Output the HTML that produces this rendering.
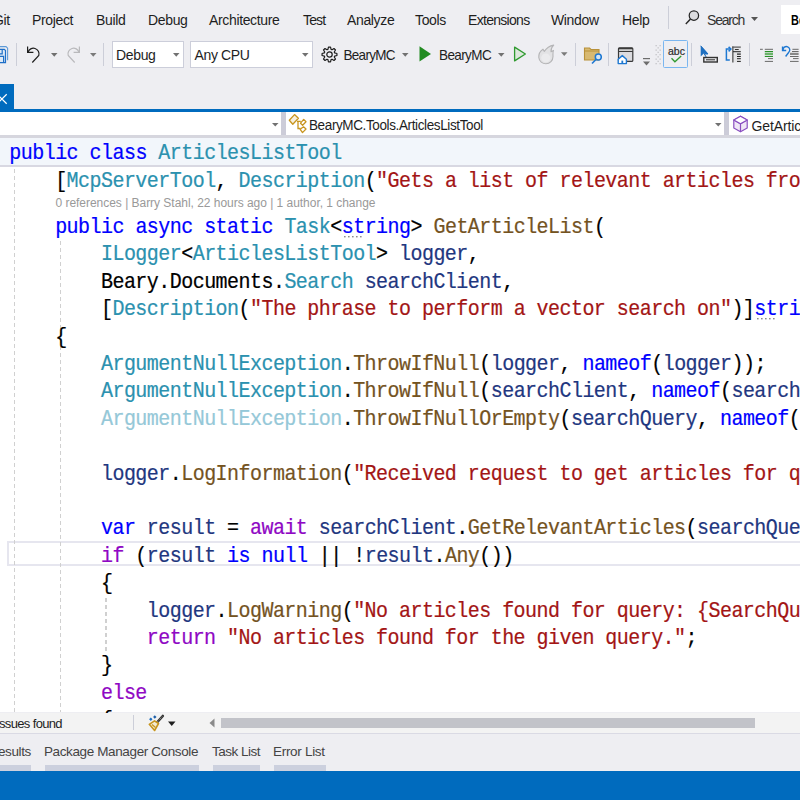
<!DOCTYPE html>
<html><head><meta charset="utf-8">
<style>
html,body{margin:0;padding:0;}
body{width:800px;height:800px;overflow:hidden;position:relative;background:#eeeef2;font-family:"Liberation Sans",sans-serif;}
.a{position:absolute;white-space:pre;}
.m{font-size:14px;color:#1e1e1e;top:11px;line-height:18px;letter-spacing:-0.35px;}
.tb{font-size:14px;color:#1e1e1e;line-height:18px;letter-spacing:-0.35px;}
.sep{position:absolute;width:1px;background:#ccced8;}
.code{font-family:"Liberation Mono",monospace;font-size:19.1px;line-height:27.4px;}
.ty2{color:#95c8d8}.kw{color:#0000ff}.ck{color:#8f08c4}.ty{color:#2b91af}.st{color:#a31515}.me{color:#74531f}.pa{color:#1f377f}.pl{color:#000}
.guide{position:absolute;width:1.4px;background:repeating-linear-gradient(to bottom,#d0d0d0 0 4.2px,transparent 4.2px 7px);}
</style></head><body>

<!-- MENU BAR -->
<div class="a m" style="left:-7px">Git</div>
<div class="a m" style="left:32px">Project</div>
<div class="a m" style="left:96px">Build</div>
<div class="a m" style="left:148px">Debug</div>
<div class="a m" style="left:209px">Architecture</div>
<div class="a m" style="left:303px;letter-spacing:-0.85px">Test</div>
<div class="a m" style="left:347px">Analyze</div>
<div class="a m" style="left:415px">Tools</div>
<div class="a m" style="left:468px;letter-spacing:-0.7px">Extensions</div>
<div class="a m" style="left:551px">Window</div>
<div class="a m" style="left:622px">Help</div>
<div class="sep" style="left:668px;top:6px;height:23px"></div>
<svg class="a" style="left:684px;top:9px" width="16" height="17" viewBox="0 0 16 17"><circle cx="9.9" cy="6.6" r="4.7" fill="#dcdcdf" stroke="#262626" stroke-width="1.25"/><line x1="6.5" y1="10" x2="1.8" y2="15" stroke="#262626" stroke-width="1.4"/></svg>
<div class="a m" style="left:707px;color:#333;letter-spacing:-1.2px">Search</div>
<svg class="a" style="left:751px;top:16.7px" width="8" height="5"><path d="M0 0h7l-3.5 4z" fill="#555"/></svg>
<div class="a" style="left:781px;top:5px;width:30px;height:29px;background:#fff"></div>
<div class="a m" style="left:790.5px;font-weight:bold;color:#000;font-size:14px;letter-spacing:0;transform:scaleX(0.78);transform-origin:0 0">Be</div>

<!-- TOOLBAR -->
<svg class="a" style="left:0;top:42px" width="12" height="24" viewBox="0 0 12 24"><path d="M-3 4.6H6L7.6 6.2V18.3" fill="none" stroke="#5d9ad8" stroke-width="1.1"/><path d="M-3 7.4H4.3L5.5 8.6V20.6H-3z" fill="#dde9f5" stroke="#1e6fc8" stroke-width="1.2"/><path d="M-3 11.9H2.2V7.4M-3 14.4H3.6V20.6" fill="none" stroke="#1e6fc8" stroke-width="1.2"/></svg>
<div class="sep" style="left:16px;top:43px;height:23px"></div>
<svg class="a" style="left:25px;top:45px" width="18" height="19" viewBox="0 0 18 19"><path d="M3 7.2A5 5 0 1 1 13.8 10.5L7.3 17.5" fill="none" stroke="#1e1e1e" stroke-width="1.2"/><path d="M2.6 1.6V7.4H8.4" fill="none" stroke="#1e1e1e" stroke-width="1.2"/></svg>
<svg class="a" style="left:51px;top:53px" width="7" height="4"><path d="M0 0h6.5l-3.25 3.8z" fill="#6f6f6f"/></svg>
<svg class="a" style="left:64px;top:45px" width="18" height="19" viewBox="0 0 18 19"><path d="M15 7.2A5 5 0 1 0 4.2 10.5L10.7 17.5" fill="none" stroke="#b9b9bc" stroke-width="1.2"/><path d="M15.4 1.6V7.4H9.6" fill="none" stroke="#b9b9bc" stroke-width="1.2"/></svg>
<svg class="a" style="left:89.5px;top:53px" width="7" height="4"><path d="M0 0h6.5l-3.25 3.8z" fill="#7a7a7a"/></svg>
<div class="sep" style="left:103px;top:43px;height:23px"></div>
<div class="a" style="left:112px;top:41px;width:70px;height:25px;background:#fff;border:1px solid #ccceda"></div>
<div class="a tb" style="left:116px;top:46px">Debug</div>
<svg class="a" style="left:173px;top:53px" width="7" height="4"><path d="M0 0h6.5l-3.25 3.8z" fill="#717171"/></svg>
<div class="a" style="left:190px;top:41px;width:121px;height:25px;background:#fff;border:1px solid #ccceda"></div>
<div class="a tb" style="left:194.5px;top:46px">Any CPU</div>
<svg class="a" style="left:301.5px;top:53px" width="7" height="4"><path d="M0 0h6.5l-3.25 3.8z" fill="#717171"/></svg>
<svg class="a" style="left:321px;top:46px" width="17" height="17" viewBox="0 0 17 17"><path d="M6.92 3.34 L7.46 1.07 L9.54 1.07 L10.08 3.34 L11.04 3.73 L13.01 2.51 L14.49 3.99 L13.27 5.96 L13.66 6.92 L15.93 7.46 L15.93 9.54 L13.66 10.08 L13.27 11.04 L14.49 13.01 L13.01 14.49 L11.04 13.27 L10.08 13.66 L9.54 15.93 L7.46 15.93 L6.92 13.66 L5.96 13.27 L3.99 14.49 L2.51 13.01 L3.73 11.04 L3.34 10.08 L1.07 9.54 L1.07 7.46 L3.34 6.92 L3.73 5.96 L2.51 3.99 L3.99 2.51 L5.96 3.73Z" fill="none" stroke="#1e1e1e" stroke-width="1.2" stroke-linejoin="round"/><circle cx="8.5" cy="8.5" r="2.7" fill="none" stroke="#1e1e1e" stroke-width="1.2"/></svg>
<div class="a tb" style="left:343.5px;top:46.5px;font-size:13.5px;letter-spacing:-0.7px;transform:scaleY(1.12);transform-origin:0 13.7px">BearyMC</div>
<svg class="a" style="left:402px;top:53px" width="7" height="4"><path d="M0 0h6.5l-3.25 3.8z" fill="#717171"/></svg>
<svg class="a" style="left:419px;top:46px" width="13" height="16" viewBox="0 0 13 16"><path d="M0.5 0.3L12 7.9 0.5 15.6z" fill="#228b22"/></svg>
<div class="a tb" style="left:439px;top:46.5px;font-size:13.5px;letter-spacing:-0.6px;transform:scaleY(1.12);transform-origin:0 13.7px">BearyMC</div>
<svg class="a" style="left:498px;top:53px" width="7" height="4"><path d="M0 0h6.5l-3.25 3.8z" fill="#717171"/></svg>
<svg class="a" style="left:513px;top:46px" width="14" height="16" viewBox="0 0 14 16"><path d="M1.6 1.1L12.4 8 1.6 14.9z" fill="#dde8dd" stroke="#2f9a2f" stroke-width="1.3" stroke-linejoin="round"/></svg>
<svg class="a" style="left:534px;top:42px" width="25" height="25" viewBox="0 0 25 25"><path d="M19.7 3.1C15 4 12.5 6 10.3 9.4L9 7.2C5.5 9.5 4.6 12.5 4.8 15.5 5.2 19.5 8.5 21.8 11.9 21.8 16 21.8 19 18.5 19 14.5 19 12.3 18.6 10.5 19.5 8.4L17 9.8C16.8 7 17.8 4.8 19.7 3.1Z" fill="#e2e2e4" stroke="#b4b4b6" stroke-width="1.1" stroke-linejoin="round"/><ellipse cx="11.8" cy="15.8" rx="4.6" ry="4.4" fill="#ebebed"/></svg>
<svg class="a" style="left:561px;top:52px" width="7" height="5"><path d="M0 0.2h6.5l-3.25 3.8z" fill="#7a7a7a"/></svg>
<div class="sep" style="left:575px;top:43px;height:23px"></div>
<svg class="a" style="left:583px;top:46px" width="19" height="19" viewBox="0 0 19 19"><path d="M1.5 2h5l1.5 1.5h8v10.5h-14.5z" fill="#d8b971" stroke="#b8913a" stroke-width="1.1"/><path d="M1.5 5h14.5" stroke="#b8913a" stroke-width="1"/><circle cx="15.3" cy="11" r="3" fill="#d6e6f5" stroke="#1e78d2" stroke-width="1.5"/><path d="M13.2 13.2L9 17.5" stroke="#1e78d2" stroke-width="1.6"/></svg>
<div class="sep" style="left:608px;top:43px;height:23px"></div>
<svg class="a" style="left:616px;top:46px" width="20" height="20" viewBox="0 0 20 20"><rect x="2.5" y="1.8" width="14.3" height="13.6" rx="1" fill="#dcdce0" stroke="#3a3a3a" stroke-width="1.2"/><rect x="2.5" y="1.8" width="14.3" height="1.8" fill="#3a3a3a"/><rect x="3.2" y="3.6" width="13" height="1.2" fill="#fff"/><rect x="2.5" y="4.8" width="14.3" height="1.2" fill="#3a3a3a"/><path d="M2.2 13.2L6.3 9.6 10.4 13.2V17.6H2.2z" fill="#fff" stroke="#1e78d2" stroke-width="1.4" stroke-linejoin="round"/><rect x="5.4" y="14.6" width="1.8" height="3" fill="#1e78d2"/><path d="M10.5 12.5V17.8M1.5 13.8L6.3 9.4 11 13.8" fill="none" stroke="#eeeef2" stroke-width="0"/></svg>
<svg class="a" style="left:643px;top:57px" width="8" height="9"><rect x="0" y="1" width="7" height="1.2" fill="#6d6d6d"/><path d="M0 4.5h7l-3.5 4z" fill="#6d6d6d"/></svg>
<svg class="a" style="left:655px;top:43px" width="7" height="23"><g fill="#c4c4c8"><rect x="0.5" y="2" width="1.3" height="1.3"/><rect x="4.5" y="2" width="1.3" height="1.3"/><rect x="0.5" y="6.5" width="1.3" height="1.3"/><rect x="4.5" y="6.5" width="1.3" height="1.3"/><rect x="0.5" y="11" width="1.3" height="1.3"/><rect x="4.5" y="11" width="1.3" height="1.3"/><rect x="0.5" y="15.5" width="1.3" height="1.3"/><rect x="4.5" y="15.5" width="1.3" height="1.3"/><rect x="0.5" y="20" width="1.3" height="1.3"/><rect x="4.5" y="20" width="1.3" height="1.3"/><rect x="2.5" y="4.2" width="1.3" height="1.3"/><rect x="2.5" y="8.7" width="1.3" height="1.3"/><rect x="2.5" y="13.2" width="1.3" height="1.3"/><rect x="2.5" y="17.7" width="1.3" height="1.3"/></g></svg>
<div class="a" style="left:663.3px;top:40.2px;width:22.4px;height:26.2px;background:#eeeef2;border:1.6px solid #7ab6f0;border-radius:1.5px"></div>
<div class="a" style="left:668px;top:44.8px;font-size:10.5px;color:#2a2a2a;letter-spacing:0px;line-height:12px;-webkit-text-stroke:0.2px #2a2a2a">abc</div>
<svg class="a" style="left:670px;top:54px" width="13" height="10"><path d="M1.5 4.3L4.9 7.8 11.2 2" fill="none" stroke="#2f9a2f" stroke-width="1.3"/></svg>
<div class="sep" style="left:691px;top:43px;height:23px"></div>
<svg class="a" style="left:699px;top:45px" width="21" height="19" viewBox="0 0 21 19"><path d="M1.7 0.8L9 9H5.3l2.2 3.5" fill="#1e6fc0" stroke="#1e6fc0" stroke-width="1"/><path d="M1.7 0.8V11.5L4.5 8.8H9z" fill="#1e6fc0"/><rect x="4.8" y="12.5" width="13.5" height="4.5" fill="#e8e8ec" stroke="#333" stroke-width="1.4"/><rect x="7" y="14" width="9" height="1.4" fill="#666"/></svg>
<svg class="a" style="left:720px;top:42px" width="24" height="24" viewBox="0 0 24 24"><path d="M9.8 7.1H6.4V18H9.8" fill="none" stroke="#1e78d2" stroke-width="1.5"/><path d="M8.6 4.9L10.9 7.1 8.6 9.4" fill="none" stroke="#1e78d2" stroke-width="1.5"/><rect x="13" y="5" width="7.8" height="15.3" fill="#e4e4e6"/><g fill="#555"><rect x="12.2" y="4.5" width="1.3" height="16"/><rect x="12.2" y="4.5" width="8.6" height="1.2"/></g><g fill="#222"><rect x="14.9" y="7" width="3.8" height="0.9"/><rect x="13" y="9.2" width="7.8" height="1"/><rect x="17" y="11.5" width="3.8" height="1.2"/><rect x="17" y="14" width="3.8" height="1"/><rect x="17" y="16.2" width="3.8" height="1"/><rect x="17" y="18.9" width="3.8" height="1"/></g></svg>
<div class="sep" style="left:749px;top:43px;height:23px"></div>
<svg class="a" style="left:755px;top:42px" width="45" height="24" viewBox="0 0 45 24"><g fill="#6a6a6a"><rect x="5" y="6.8" width="2.8" height="1"/><rect x="9.8" y="6.8" width="8.2" height="1"/><rect x="13" y="16.1" width="5" height="1"/><rect x="9.8" y="18.9" width="8.2" height="1"/></g><rect x="9.8" y="9" width="8.2" height="1" fill="#2a8f2a"/><rect x="9.8" y="10.6" width="8.2" height="2.6" fill="#6cb46c"/><rect x="9.8" y="14" width="8.2" height="1" fill="#2a8f2a"/><path d="M28 8.2A3.4 3.4 0 1 1 33.6 10.5L30.6 14.5" fill="none" stroke="#1e78d2" stroke-width="1.4"/><path d="M27.6 4.5V8.5H31.2" fill="none" stroke="#1e78d2" stroke-width="1.5"/><g fill="#6a6a6a"><rect x="37.4" y="6.8" width="6.2" height="1"/><rect x="37" y="9" width="6.6" height="1"/><rect x="35" y="10.8" width="8.6" height="2.2" fill="#888"/><rect x="35" y="14" width="8.6" height="1"/><rect x="38" y="16.1" width="5.6" height="1"/><rect x="35" y="18.9" width="8.6" height="1"/></g></svg>

<!-- TABS -->
<div class="a" style="left:0;top:84px;width:13.5px;height:25px;background:#006bbe"></div>
<svg class="a" style="left:0;top:92px" width="10" height="14"><path d="M-3 2.2L6.7 11.8M6.7 2.2L-3 11.8" stroke="#fff" stroke-width="1.2"/></svg>
<div class="a" style="left:0;top:109px;width:800px;height:3px;background:#006bbe"></div>
<!-- NAV BAR -->
<div class="a" style="left:0;top:112px;width:800px;height:23px;background:#fff"></div>
<div class="a" style="left:0;top:135px;width:800px;height:3px;background:#d6d6de"></div>
<svg class="a" style="left:272px;top:123px" width="7" height="4"><path d="M0 0h6.5l-3.25 3.6z" fill="#717171"/></svg>
<div class="a" style="left:281px;top:112px;width:4.5px;height:23px;background:#ccccd8"></div>
<svg class="a" style="left:285px;top:110px" width="25" height="26" viewBox="0 0 25 26"><path d="M4.3 10.2L9.5 4.6 13.4 8.2 7.8 14.2z" fill="#f6efdf" stroke="#c8951e" stroke-width="1.3" stroke-linejoin="round"/><path d="M15.5 13.2L18.7 9.4 21 11.8 17.6 15.2z" fill="#fff" stroke="#c8951e" stroke-width="1.3" stroke-linejoin="round"/><path d="M15.2 19.3L18.5 16.8 21 19 17.5 22.6z" fill="#fff" stroke="#c8951e" stroke-width="1.3" stroke-linejoin="round"/><path d="M12 11.4H15.8M13 11.4V18.5H15.5" fill="none" stroke="#c8951e" stroke-width="1.3"/></svg>
<div class="a" style="left:309px;top:117.5px;font-size:13.5px;color:#1e1e1e;line-height:16px;letter-spacing:-0.38px;transform:scaleY(1.1);transform-origin:0 12.7px">BearyMC.Tools.ArticlesListTool</div>
<svg class="a" style="left:715px;top:123px" width="7" height="4"><path d="M0 0h6.5l-3.25 3.6z" fill="#717171"/></svg>
<div class="a" style="left:724px;top:112px;width:4.5px;height:23px;background:#ccccd8"></div>
<svg class="a" style="left:732px;top:115px" width="17" height="18" viewBox="0 0 17 18"><path d="M8.5 1.2L15.2 5v8L8.5 16.8 1.8 13V5z" fill="#efe6f6" stroke="#8a4fc0" stroke-width="1.2" stroke-linejoin="round"/><path d="M1.8 5L8.5 8.8 15.2 5M8.5 8.8V16.8" fill="none" stroke="#8a4fc0" stroke-width="1.2"/><path d="M1.8 5L8.5 1.2 15.2 5 8.5 8.8z" fill="#fff"/><path d="M1.8 5L8.5 1.2 15.2 5 8.5 8.8z" fill="none" stroke="#8a4fc0" stroke-width="1.2" stroke-linejoin="round"/></svg>
<div class="a" style="left:751.5px;top:117.5px;font-size:14px;color:#1e1e1e;line-height:16px;letter-spacing:-0.1px;transform:scaleY(1.08);transform-origin:0 12.7px">GetArticleList</div>
<!-- EDITOR -->
<div class="a" style="left:0;top:138px;width:800px;height:574px;background:#fff"></div>
<div class="a" style="left:0;top:138px;width:800px;height:27px;background:#f2f6fb"></div>
<div class="a" style="left:0;top:165px;width:800px;height:1.6px;background:#d8d8e2"></div>
<div class="a" style="left:7px;top:540.8px;width:800px;height:21.5px;border:2px solid #e6e6ef"></div>
<div class="guide" style="left:13.9px;top:169px;height:543px"></div>
<div class="guide" style="left:59.7px;top:241px;height:471px"></div>
<div class="guide" style="left:105.2px;top:597.5px;height:53px"></div>
<style>.code{font-size:20.0px;letter-spacing:-0.540px;transform:scaleY(1.08);transform-origin:0 19.02px;-webkit-text-stroke:0.2px currentColor}</style>
<div class="a code" style="left:9.30px;top:140.48px"><span class="kw">public</span> <span class="kw">class</span> <span class="ty">ArticlesListTool</span></div>
<div class="a code" style="left:55.14px;top:167.98px"><span class="pl">[</span><span class="ty">McpServerTool</span><span class="pl">, </span><span class="ty">Description</span><span class="pl">(</span><span class="st">"Gets a list of relevant articles from the blog"</span><span class="pl">)]</span></div>
<div class="a code" style="left:55.14px;top:213.98px"><span class="kw">public</span> <span class="kw">async</span> <span class="kw">static</span> <span class="ty">Task</span><span class="pl">&lt;</span><span class="kw">string</span><span class="pl">&gt;</span> <span class="me">GetArticleList</span><span class="pl">(</span></div>
<div class="a code" style="left:100.98px;top:241.38px"><span class="ty">ILogger</span><span class="pl">&lt;</span><span class="ty">ArticlesListTool</span><span class="pl">&gt;</span> <span class="pa">logger</span><span class="pl">,</span></div>
<div class="a code" style="left:100.98px;top:268.78px"><span class="pl">Beary.Documents.</span><span class="ty">Search</span> <span class="pa">searchClient</span><span class="pl">,</span></div>
<div class="a code" style="left:100.98px;top:296.18px"><span class="pl">[</span><span class="ty">Description</span><span class="pl">(</span><span class="st">"The phrase to perform a vector search on"</span><span class="pl">)]</span><span class="kw">string</span> <span class="pa">searchQuery</span><span class="pl">)</span></div>
<div class="a code" style="left:55.14px;top:323.58px"><span class="pl">{</span></div>
<div class="a code" style="left:100.98px;top:350.98px"><span class="ty">ArgumentNullException</span><span class="pl">.</span><span class="me">ThrowIfNull</span><span class="pl">(</span><span class="pa">logger</span><span class="pl">, </span><span class="kw">nameof</span><span class="pl">(</span><span class="pa">logger</span><span class="pl">));</span></div>
<div class="a code" style="left:100.98px;top:378.38px"><span class="ty">ArgumentNullException</span><span class="pl">.</span><span class="me">ThrowIfNull</span><span class="pl">(</span><span class="pa">searchClient</span><span class="pl">, </span><span class="kw">nameof</span><span class="pl">(</span><span class="pa">searchClient</span><span class="pl">));</span></div>
<div class="a code" style="left:100.98px;top:405.78px"><span class="ty2">ArgumentNullException</span><span class="pl">.</span><span class="me">ThrowIfNullOrEmpty</span><span class="pl">(</span><span class="pa">searchQuery</span><span class="pl">, </span><span class="kw">nameof</span><span class="pl">(</span><span class="pa">searchQuery</span><span class="pl">));</span></div>
<div class="a code" style="left:100.98px;top:460.58px"><span class="pa">logger</span><span class="pl">.</span><span class="me">LogInformation</span><span class="pl">(</span><span class="st">"Received request to get articles for query: {SearchQuery}"</span><span class="pl">, </span><span class="pa">searchQuery</span><span class="pl">);</span></div>
<div class="a code" style="left:100.98px;top:515.38px"><span class="kw">var</span> <span class="pa">result</span><span class="pl"> = </span><span class="ck">await</span> <span class="pa">searchClient</span><span class="pl">.</span><span class="me">GetRelevantArticles</span><span class="pl">(</span><span class="pa">searchQuery</span><span class="pl">);</span></div>
<div class="a code" style="left:100.98px;top:542.78px"><span class="ck">if</span><span class="pl"> (</span><span class="pa">result</span> <span class="kw">is</span> <span class="kw">null</span><span class="pl"> || !</span><span class="pa">result</span><span class="pl">.</span><span class="me">Any</span><span class="pl">())</span></div>
<div class="a code" style="left:100.98px;top:570.18px"><span class="pl">{</span></div>
<div class="a code" style="left:146.82px;top:597.58px"><span class="pa">logger</span><span class="pl">.</span><span class="me">LogWarning</span><span class="pl">(</span><span class="st">"No articles found for query: {SearchQuery}"</span><span class="pl">, </span><span class="pa">searchQuery</span><span class="pl">);</span></div>
<div class="a code" style="left:146.82px;top:624.98px"><span class="ck">return</span> <span class="st">"No articles found for the given query."</span><span class="pl">;</span></div>
<div class="a code" style="left:100.98px;top:652.38px"><span class="pl">}</span></div>
<div class="a code" style="left:100.98px;top:679.78px"><span class="ck">else</span></div>
<div class="a code" style="left:100.98px;top:707.18px"><span class="pl">{</span></div>
<div class="a" style="left:55.5px;top:196px;font-size:12px;line-height:14px;color:#999;letter-spacing:-0.03px">0 references | Barry Stahl, 22 hours ago | 1 author, 1 change</div>
<svg class="a" style="left:343.5px;top:236px" width="21" height="2"><g fill="#8c8c8c"><rect x="0" y="0" width="1.6" height="1.4"/><rect x="4" y="0" width="1.6" height="1.4"/><rect x="8" y="0" width="1.6" height="1.4"/><rect x="12" y="0" width="1.6" height="1.4"/><rect x="16" y="0" width="1.6" height="1.4"/></g></svg>
<svg class="a" style="left:757px;top:318px" width="43" height="2"><g fill="#8c8c8c"><rect x="0" y="0" width="1.6" height="1.4"/><rect x="4" y="0" width="1.6" height="1.4"/><rect x="8" y="0" width="1.6" height="1.4"/><rect x="12" y="0" width="1.6" height="1.4"/><rect x="16" y="0" width="1.6" height="1.4"/></g></svg>
<!-- EDITOR BOTTOM BAR -->
<div class="a" style="left:0;top:712.5px;width:800px;height:20px;background:#f3f3f3"></div>
<div class="a" style="left:0;top:732.5px;width:800px;height:1.5px;background:#dadae4"></div>
<div class="a" style="left:-1px;top:716px;font-size:13px;line-height:16px;color:#1e1e1e;letter-spacing:-0.65px">ssues found</div>
<div class="sep" style="left:133px;top:715px;height:15px"></div>
<svg class="a" style="left:140px;top:710px" width="40" height="25" viewBox="0 0 40 25"><path d="M17 12.5L22.8 6" stroke="#333" stroke-width="2.6" stroke-linecap="round"/><path d="M17.5 11.8L22.3 6.5" stroke="#bbb" stroke-width="0.8" stroke-dasharray="1 1"/><path d="M9.3 14.3L14.5 10.8 18.5 13.5 14.6 20.5z" fill="#f3ebd2" stroke="#c8951e" stroke-width="1.6" stroke-linejoin="round"/><path d="M12 14.5L15.5 17.5" stroke="#c8951e" stroke-width="1.2"/><path d="M10.8 7.5L12.5 9.2 10.8 10.9 9.1 9.2z" fill="#1e6fc0"/><path d="M14.8 5.3L16.5 7 14.8 8.7 13.1 7z" fill="#1e5fa8"/></svg>
<svg class="a" style="left:168px;top:720.5px" width="8" height="6"><path d="M0 0.5h7.5l-3.75 4.5z" fill="#1e1e1e"/></svg>
<svg class="a" style="left:208px;top:718px" width="8" height="10"><path d="M6.5 0.5v9l-5-4.5z" fill="#8a8a8a"/></svg>
<div class="a" style="left:221px;top:717.5px;width:534px;height:10.5px;background:#c2c3c9"></div>
<!-- TOOL WINDOW TABS -->
<div class="a" style="left:-2px;top:743px;font-size:13.5px;line-height:18px;color:#444;letter-spacing:-0.4px">esults</div>
<div class="a" style="left:44px;top:743px;font-size:13.5px;line-height:18px;color:#444;letter-spacing:-0.38px">Package Manager Console</div>
<div class="a" style="left:212px;top:743px;font-size:13.5px;line-height:18px;color:#444;letter-spacing:-0.5px">Task List</div>
<div class="a" style="left:273px;top:743px;font-size:13.5px;line-height:18px;color:#444;letter-spacing:-0.3px">Error List</div>
<div class="a" style="left:0;top:764.5px;width:30.5px;height:6px;background:#ccd0de"></div>
<div class="a" style="left:44.5px;top:764.5px;width:154px;height:6px;background:#ccd0de"></div>
<div class="a" style="left:212.5px;top:764.5px;width:47.5px;height:6px;background:#ccd0de"></div>
<div class="a" style="left:273.5px;top:764.5px;width:52px;height:6px;background:#ccd0de"></div>
<!-- STATUS BAR -->
<div class="a" style="left:0;top:771px;width:800px;height:29px;background:#006bbe"></div>
</body></html>
